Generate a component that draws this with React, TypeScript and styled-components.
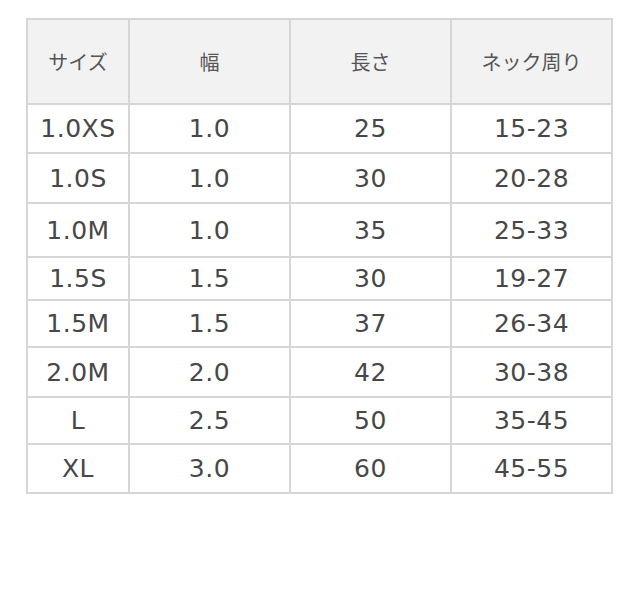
import styled, { createGlobalStyle } from "styled-components";

const GlobalStyle = createGlobalStyle`
  body {
    margin: 0;
    background: #ffffff;
  }
`;

const headers = ["サイズ", "幅", "長さ", "ネック周り"];

const rows = [
  { cells: ["1.0XS", "1.0", "25", "15-23"], height: 49 },
  { cells: ["1.0S", "1.0", "30", "20-28"], height: 50 },
  { cells: ["1.0M", "1.0", "35", "25-33"], height: 54 },
  { cells: ["1.5S", "1.5", "30", "19-27"], height: 43 },
  { cells: ["1.5M", "1.5", "37", "26-34"], height: 47 },
  { cells: ["2.0M", "2.0", "42", "30-38"], height: 50 },
  { cells: ["L", "2.5", "50", "35-45"], height: 47 },
  { cells: ["XL", "3.0", "60", "45-55"], height: 49 },
];

const colWidths = [102, 161, 161, 161];

const App = () => {
  return (
    <Page>
      <GlobalStyle />
      <SizeTable>
        <colgroup>
          {colWidths.map((w, i) => (
            <Col key={i} $width={w} />
          ))}
        </colgroup>
        <thead>
          <Row $height={85}>
            {headers.map((h) => (
              <HeadCell key={h}>{h}</HeadCell>
            ))}
          </Row>
        </thead>
        <tbody>
          {rows.map((row) => (
            <Row key={row.cells[0]} $height={row.height}>
              {row.cells.map((c, i) => (
                <Cell key={i}>{c}</Cell>
              ))}
            </Row>
          ))}
        </tbody>
      </SizeTable>
    </Page>
  );
};

const Page = styled.div`
  width: 640px;
  height: 608px;
  padding: 18px 0 0 26px;
  box-sizing: border-box;
  background: #ffffff;
`;

const SizeTable = styled.table`
  table-layout: fixed;
  border-collapse: separate;
  border-spacing: 0;
  width: 587px;
  border-top: 2px solid #d6d6d6;
  border-left: 2px solid #d6d6d6;
`;

const Col = styled.col<{ $width: number }>`
  width: ${({ $width }) => $width}px;
`;

const Row = styled.tr<{ $height: number }>`
  height: ${({ $height }) => $height}px;
`;

const HeadCell = styled.th`
  padding: 0 0 0 0;
  border-right: 2px solid #d6d6d6;
  border-bottom: 2px solid #d6d6d6;
  background-color: #f2f2f2;
  font-family: "Noto Sans CJK JP", "Noto Sans", sans-serif;
  font-size: 20px;
  font-weight: 400;
  color: #555555;
  text-align: center;
  vertical-align: middle;
`;

const Cell = styled.td`
  padding: 0;
  border-right: 2px solid #d6d6d6;
  border-bottom: 2px solid #d6d6d6;
  font-family: "DejaVu Sans", "Noto Sans", sans-serif;
  font-size: 25px;
  font-weight: 400;
  letter-spacing: 0.5px;
  color: #474747;
  text-align: center;
  vertical-align: middle;
`;

export default App;
